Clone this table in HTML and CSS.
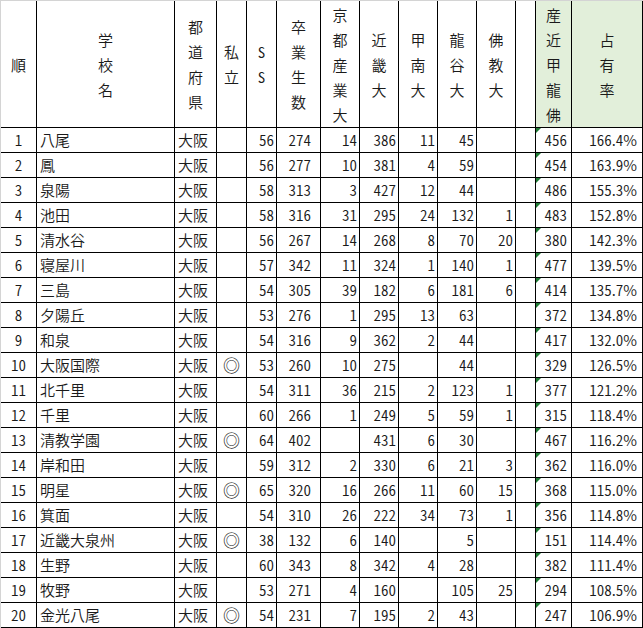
FILE: index.html
```html
<!DOCTYPE html>
<html lang="ja">
<head>
<meta charset="utf-8">
<title>占有率</title>
<link rel="stylesheet" href="styles.css">
</head>
<body>
<div class="sheet">
  <div class="h"><span class="ht">順</span></div>
  <div class="h">学<br>校<br>名</div>
  <div class="h">都<br>道<br>府<br>県</div>
  <div class="h">私<br>立</div>
  <div class="h n">S<br>S</div>
  <div class="h">卒<br>業<br>生<br>数</div>
  <div class="h">京<br>都<br>産<br>業<br>大</div>
  <div class="h">近<br>畿<br>大</div>
  <div class="h">甲<br>南<br>大</div>
  <div class="h">龍<br>谷<br>大</div>
  <div class="h">佛<br>教<br>大</div>
  <div class="h"></div>
  <div class="h g">産<br>近<br>甲<br>龍<br>佛</div>
  <div class="h g">占<br>有<br>率</div>

  <div class="c n ctr">1</div><div class="c l">八尾</div><div class="c l">大阪</div><div class="c ctr"></div><div class="c n r">56</div><div class="c n r w">274</div><div class="c n r">14</div><div class="c n r">386</div><div class="c n r">11</div><div class="c n r">45</div><div class="c n r"></div><div class="c"></div><div class="c n r t">456</div><div class="c r p"><span class="d">166</span>.<span class="d">4</span>%</div>
  <div class="c n ctr">2</div><div class="c l">鳳</div><div class="c l">大阪</div><div class="c ctr"></div><div class="c n r">56</div><div class="c n r w">277</div><div class="c n r">10</div><div class="c n r">381</div><div class="c n r">4</div><div class="c n r">59</div><div class="c n r"></div><div class="c"></div><div class="c n r t">454</div><div class="c r p"><span class="d">163</span>.<span class="d">9</span>%</div>
  <div class="c n ctr">3</div><div class="c l">泉陽</div><div class="c l">大阪</div><div class="c ctr"></div><div class="c n r">58</div><div class="c n r w">313</div><div class="c n r">3</div><div class="c n r">427</div><div class="c n r">12</div><div class="c n r">44</div><div class="c n r"></div><div class="c"></div><div class="c n r t">486</div><div class="c r p"><span class="d">155</span>.<span class="d">3</span>%</div>
  <div class="c n ctr">4</div><div class="c l">池田</div><div class="c l">大阪</div><div class="c ctr"></div><div class="c n r">58</div><div class="c n r w">316</div><div class="c n r">31</div><div class="c n r">295</div><div class="c n r">24</div><div class="c n r">132</div><div class="c n r">1</div><div class="c"></div><div class="c n r t">483</div><div class="c r p"><span class="d">152</span>.<span class="d">8</span>%</div>
  <div class="c n ctr">5</div><div class="c l">清水谷</div><div class="c l">大阪</div><div class="c ctr"></div><div class="c n r">56</div><div class="c n r w">267</div><div class="c n r">14</div><div class="c n r">268</div><div class="c n r">8</div><div class="c n r">70</div><div class="c n r">20</div><div class="c"></div><div class="c n r t">380</div><div class="c r p"><span class="d">142</span>.<span class="d">3</span>%</div>
  <div class="c n ctr">6</div><div class="c l">寝屋川</div><div class="c l">大阪</div><div class="c ctr"></div><div class="c n r">57</div><div class="c n r w">342</div><div class="c n r">11</div><div class="c n r">324</div><div class="c n r">1</div><div class="c n r">140</div><div class="c n r">1</div><div class="c"></div><div class="c n r t">477</div><div class="c r p"><span class="d">139</span>.<span class="d">5</span>%</div>
  <div class="c n ctr">7</div><div class="c l">三島</div><div class="c l">大阪</div><div class="c ctr"></div><div class="c n r">54</div><div class="c n r w">305</div><div class="c n r">39</div><div class="c n r">182</div><div class="c n r">6</div><div class="c n r">181</div><div class="c n r">6</div><div class="c"></div><div class="c n r t">414</div><div class="c r p"><span class="d">135</span>.<span class="d">7</span>%</div>
  <div class="c n ctr">8</div><div class="c l">夕陽丘</div><div class="c l">大阪</div><div class="c ctr"></div><div class="c n r">53</div><div class="c n r w">276</div><div class="c n r">1</div><div class="c n r">295</div><div class="c n r">13</div><div class="c n r">63</div><div class="c n r"></div><div class="c"></div><div class="c n r t">372</div><div class="c r p"><span class="d">134</span>.<span class="d">8</span>%</div>
  <div class="c n ctr">9</div><div class="c l">和泉</div><div class="c l">大阪</div><div class="c ctr"></div><div class="c n r">54</div><div class="c n r w">316</div><div class="c n r">9</div><div class="c n r">362</div><div class="c n r">2</div><div class="c n r">44</div><div class="c n r"></div><div class="c"></div><div class="c n r t">417</div><div class="c r p"><span class="d">132</span>.<span class="d">0</span>%</div>
  <div class="c n ctr">10</div><div class="c l">大阪国際</div><div class="c l">大阪</div><div class="c ctr m">◎</div><div class="c n r">53</div><div class="c n r w">260</div><div class="c n r">10</div><div class="c n r">275</div><div class="c n r"></div><div class="c n r">44</div><div class="c n r"></div><div class="c"></div><div class="c n r t">329</div><div class="c r p"><span class="d">126</span>.<span class="d">5</span>%</div>
  <div class="c n ctr">11</div><div class="c l">北千里</div><div class="c l">大阪</div><div class="c ctr"></div><div class="c n r">54</div><div class="c n r w">311</div><div class="c n r">36</div><div class="c n r">215</div><div class="c n r">2</div><div class="c n r">123</div><div class="c n r">1</div><div class="c"></div><div class="c n r t">377</div><div class="c r p"><span class="d">121</span>.<span class="d">2</span>%</div>
  <div class="c n ctr">12</div><div class="c l">千里</div><div class="c l">大阪</div><div class="c ctr"></div><div class="c n r">60</div><div class="c n r w">266</div><div class="c n r">1</div><div class="c n r">249</div><div class="c n r">5</div><div class="c n r">59</div><div class="c n r">1</div><div class="c"></div><div class="c n r t">315</div><div class="c r p"><span class="d">118</span>.<span class="d">4</span>%</div>
  <div class="c n ctr">13</div><div class="c l">清教学園</div><div class="c l">大阪</div><div class="c ctr m">◎</div><div class="c n r">64</div><div class="c n r w">402</div><div class="c n r"></div><div class="c n r">431</div><div class="c n r">6</div><div class="c n r">30</div><div class="c n r"></div><div class="c"></div><div class="c n r t">467</div><div class="c r p"><span class="d">116</span>.<span class="d">2</span>%</div>
  <div class="c n ctr">14</div><div class="c l">岸和田</div><div class="c l">大阪</div><div class="c ctr"></div><div class="c n r">59</div><div class="c n r w">312</div><div class="c n r">2</div><div class="c n r">330</div><div class="c n r">6</div><div class="c n r">21</div><div class="c n r">3</div><div class="c"></div><div class="c n r t">362</div><div class="c r p"><span class="d">116</span>.<span class="d">0</span>%</div>
  <div class="c n ctr">15</div><div class="c l">明星</div><div class="c l">大阪</div><div class="c ctr m">◎</div><div class="c n r">65</div><div class="c n r w">320</div><div class="c n r">16</div><div class="c n r">266</div><div class="c n r">11</div><div class="c n r">60</div><div class="c n r">15</div><div class="c"></div><div class="c n r t">368</div><div class="c r p"><span class="d">115</span>.<span class="d">0</span>%</div>
  <div class="c n ctr">16</div><div class="c l">箕面</div><div class="c l">大阪</div><div class="c ctr"></div><div class="c n r">54</div><div class="c n r w">310</div><div class="c n r">26</div><div class="c n r">222</div><div class="c n r">34</div><div class="c n r">73</div><div class="c n r">1</div><div class="c"></div><div class="c n r t">356</div><div class="c r p"><span class="d">114</span>.<span class="d">8</span>%</div>
  <div class="c n ctr">17</div><div class="c l">近畿大泉州</div><div class="c l">大阪</div><div class="c ctr m">◎</div><div class="c n r">38</div><div class="c n r w">132</div><div class="c n r">6</div><div class="c n r">140</div><div class="c n r"></div><div class="c n r">5</div><div class="c n r"></div><div class="c"></div><div class="c n r t">151</div><div class="c r p"><span class="d">114</span>.<span class="d">4</span>%</div>
  <div class="c n ctr">18</div><div class="c l">生野</div><div class="c l">大阪</div><div class="c ctr"></div><div class="c n r">60</div><div class="c n r w">343</div><div class="c n r">8</div><div class="c n r">342</div><div class="c n r">4</div><div class="c n r">28</div><div class="c n r"></div><div class="c"></div><div class="c n r t">382</div><div class="c r p"><span class="d">111</span>.<span class="d">4</span>%</div>
  <div class="c n ctr">19</div><div class="c l">牧野</div><div class="c l">大阪</div><div class="c ctr"></div><div class="c n r">53</div><div class="c n r w">271</div><div class="c n r">4</div><div class="c n r">160</div><div class="c n r"></div><div class="c n r">105</div><div class="c n r">25</div><div class="c"></div><div class="c n r t">294</div><div class="c r p"><span class="d">108</span>.<span class="d">5</span>%</div>
  <div class="c n ctr">20</div><div class="c l">金光八尾</div><div class="c l">大阪</div><div class="c ctr m">◎</div><div class="c n r">54</div><div class="c n r w">231</div><div class="c n r">7</div><div class="c n r">195</div><div class="c n r">2</div><div class="c n r">43</div><div class="c n r"></div><div class="c"></div><div class="c n r t">247</div><div class="c r p"><span class="d">106</span>.<span class="d">9</span>%</div>
</div>
</body>
</html>
```
FILE: styles.css
```css
html, body {
  margin: 0;
  padding: 0;
  background: #ffffff;
}

.sheet {
  display: grid;
  grid-template-columns: 36px 138px 42px 30px 30px 44px 39px 39px 39px 39px 39px 20px 36px 71px;
  grid-template-rows: 127px repeat(20, 25px);
  width: 643px;
  box-sizing: border-box;
  border-left: 1px solid #d4d4d4;
  border-top: 1px solid #d4d4d4;
  font-family: "Noto Sans CJK JP", "Noto Sans", sans-serif;
  font-size: 15px;
  font-weight: 350;
  color: #1a1a1a;
}

.h, .c {
  box-sizing: border-box;
  border-right: 1px solid #000;
  border-bottom: 1px solid #000;
  white-space: nowrap;
  overflow: hidden;
}

.h {
  display: flex;
  align-items: center;
  justify-content: center;
  text-align: center;
  line-height: 25px;
  color: #1a1a1a;
}

.ht {
  font-family: "Noto Sans CJK SC", "Noto Sans CJK JP", sans-serif;
  font-weight: 400;
  color: #222222;
}

.g {
  background: #e2efda;
}

.c {
  line-height: 24px;
}

.n,
.d {
  font-family: "Noto Sans CJK JP", sans-serif;
  font-feature-settings: "hwid" 1;
  font-size: 15px;
}

.m {
  font-family: "Noto Sans CJK JP", sans-serif;
  font-size: 17px;
  font-weight: 400;
  color: #111111;
}

.ctr {
  text-align: center;
}

.l {
  text-align: left;
  padding-left: 3px;
}

.r {
  text-align: right;
  padding-right: 2px;
}

.w {
  padding-right: 9px;
}

.p {
  padding-right: 5px;
}

.t {
  position: relative;
  padding-right: 4px;
}

.t::before {
  content: "";
  position: absolute;
  left: 0;
  top: 0;
  width: 0;
  height: 0;
  border-top: 5px solid #1e7b34;
  border-right: 5px solid transparent;
}
```
